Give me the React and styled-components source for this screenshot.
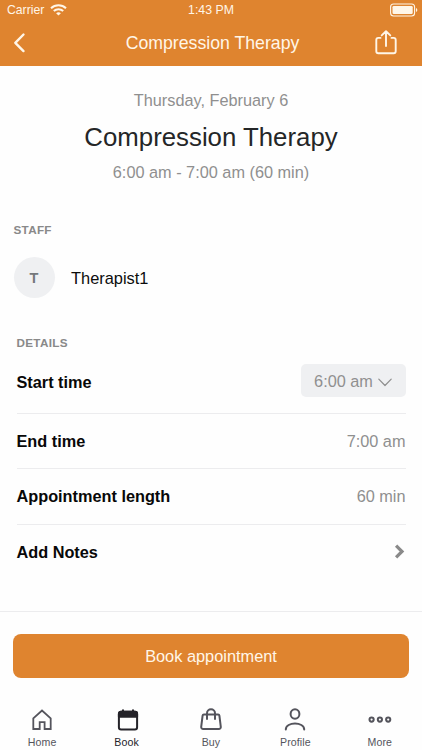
import React from "react";
import styled, { createGlobalStyle } from "styled-components";

const GlobalStyle = createGlobalStyle`
  * { box-sizing: border-box; }
  body { margin: 0; background: #fff; font-family: "Liberation Sans", Arial, sans-serif; }
  button { font: inherit; border: 0; padding: 0; background: none; color: inherit; }
`;

const Screen = styled.div`
  width: 422px;
  height: 750px;
  display: flex;
  flex-direction: column;
  background: #fefefe;
  overflow: hidden;
`;

const Header = styled.header`
  height: 66px;
  background: #df842f;
  color: #fff6e8;
`;

const StatusBar = styled.div`
  height: 20px;
  display: grid;
  grid-template-columns: 1fr auto 1fr;
  align-items: center;
  padding: 0 4px 0 7px;
  font-size: 12.2px;
  line-height: 18px;
`;

const Carrier = styled.div`
  display: flex;
  align-items: center;
  gap: 6px;
`;

const Clock = styled.div`
  margin-left: -3px;
  font-size: 12.3px;
`;

const BatteryBox = styled.div`
  display: flex;
  justify-content: flex-end;
`;

const NavBar = styled.div`
  height: 46px;
  display: grid;
  grid-template-columns: 40px 1fr 40px;
  align-items: center;
  padding: 0 21px 0 11px;
`;

const NavTitle = styled.div`
  padding-left: 13px;
  font-size: 17.7px;
  text-align: center;
  white-space: nowrap;
`;

const IconButton = styled.button`
  display: flex;
  justify-content: ${(p) => (p.$end ? "flex-end" : "flex-start")};
`;

const Summary = styled.section`
  display: flex;
  flex-direction: column;
  align-items: center;
  height: 156px;
  padding-top: 23px;
  white-space: nowrap;
`;

const SummaryText = styled.div`
  font-size: 16.3px;
  line-height: 22px;
  color: #8f8f8f;
`;

const Title = styled.h1`
  margin: 10px 0 8px;
  font-size: 25.8px;
  font-weight: 400;
  line-height: 32px;
  color: #242627;
`;

const SectionLabel = styled.h2`
  margin: 0;
  font-size: 11.7px;
  font-weight: 700;
  line-height: 16px;
  letter-spacing: 0.3px;
  color: #898989;
`;

const Staff = styled.section`
  height: 113px;
  padding-left: 13.5px;
`;

const StaffRow = styled.div`
  display: flex;
  align-items: center;
  gap: 16.5px;
  margin-top: 19px;
  font-size: 16.4px;
  color: #0c0c0c;
`;

const StaffName = styled.span`
  padding-top: 2px;
`;

const Avatar = styled.div`
  width: 41px;
  height: 41px;
  display: flex;
  align-items: center;
  justify-content: center;
  border-radius: 50%;
  background: #eff0f2;
  color: #75787c;
  font-size: 14.5px;
  font-weight: 700;
`;

const Details = styled.section`
  flex: 1;
  padding: 0 16px 0 16.5px;
`;

const Row = styled.div`
  height: ${(p) => p.$height || 55.3}px;
  display: flex;
  align-items: center;
  justify-content: space-between;
  padding-right: 0.5px;
  border-bottom: ${(p) => (p.$last ? 0 : 1)}px solid #ececee;
`;

const RowLabel = styled.span`
  font-size: 16.3px;
  font-weight: 700;
  color: #080808;
`;

const RowValue = styled.span`
  font-size: 16.3px;
  color: #8f8f8f;
`;

const TimeSelect = styled.button`
  width: 105px;
  height: 33px;
  display: flex;
  align-items: center;
  justify-content: center;
  gap: 5px;
  margin-top: -3px;
  padding-top: 1px;
  border-radius: 5px;
  background: #eff0f2;
  color: #8f8f8f;
  font-size: 16.3px;

  svg {
    margin-top: 2px;
  }
`;

const ActionBar = styled.div`
  height: 79px;
  padding: 22px 13px 0;
  border-top: 1px solid #ececee;
`;

const BookButton = styled.button`
  width: 100%;
  height: 44px;
  border-radius: 8px;
  background: #df842f;
  color: #fff6e8;
  font-size: 16.35px;
`;

const TabBar = styled.nav`
  height: 60px;
  display: grid;
  grid-template-columns: repeat(5, 84.4px);
`;

const Tab = styled.div`
  display: flex;
  flex-direction: column;
  align-items: center;
  padding-top: 16px;
  font-size: 10.6px;
  line-height: 12px;
  letter-spacing: 0.1px;
  color: ${(p) => (p.$active ? "#242329" : "#54545c")};
`;

const TabIcon = styled.svg`
  width: 26px;
  height: 26px;
  margin-bottom: 4px;
  fill: none;
  stroke: currentColor;
  stroke-width: 2;
  stroke-linejoin: round;
  stroke-linecap: round;
`;

const Wifi = () => (
  <svg width="17" height="12" viewBox="0 0 17 12" fill="none" stroke="currentColor" strokeWidth="2">
    <path d="M1 4.2C5.2.2 11.8.2 16 4.2M3.8 7.1c2.7-2.5 6.7-2.5 9.4 0" />
    <path d="M6.1 9.2c1.4-1.2 3.4-1.2 4.8 0L8.5 11.6Z" fill="currentColor" stroke="none" />
  </svg>
);

const Battery = () => (
  <svg width="28" height="14" viewBox="0 0 28 14" fill="none">
    <rect x=".6" y="1" width="24" height="12" rx="3" stroke="currentColor" strokeWidth="1.1" />
    <rect x="2.5" y="3" width="20.2" height="8" rx="1.2" fill="currentColor" />
    <path d="M26 5c1.8.7 1.8 3.3 0 4Z" fill="currentColor" />
  </svg>
);

const BackIcon = () => (
  <svg width="16" height="22" viewBox="0 0 16 22" fill="none" stroke="currentColor" strokeWidth="2.4" strokeLinecap="round" strokeLinejoin="round">
    <path d="M12.5 2.5 4.3 10.8l8.2 8.3" />
  </svg>
);

const ShareIcon = () => (
  <svg width="30" height="30" viewBox="0 0 30 30" fill="none" stroke="currentColor" strokeWidth="1.9" strokeLinecap="round" strokeLinejoin="round">
    <path d="M9.5 9.9H7.3a2 2 0 0 0-2 2v11.3a2 2 0 0 0 2 2h15.4a2 2 0 0 0 2-2V11.9a2 2 0 0 0-2-2h-2.2M15 18V4M10.7 7.4 15 3.3l4.3 4.1" />
  </svg>
);

const ChevronDown = () => (
  <svg width="14" height="9" viewBox="0 0 14 9" fill="none" stroke="currentColor" strokeWidth="1.2" strokeLinecap="round" strokeLinejoin="round">
    <path d="m.8 1.1 6.2 6.4 6.2-6.4" />
  </svg>
);

const ChevronRight = () => (
  <svg width="12" height="16" viewBox="0 0 12 16" fill="none" stroke="#8a8a8a" strokeWidth="3.2">
    <path d="m2.1 1.6 5.9 5.9-5.9 5.9" />
  </svg>
);

const tabs = [
  { name: "Home", icon: <path d="M4.3 23V12.4L13 4.5l8.7 7.9V23h-6.1v-6.8h-4.9V23Z" strokeLinejoin="miter" strokeWidth="1.8" /> },
  {
    name: "Book",
    active: true,
    icon: (
      <>
        <rect x="4.9" y="5.8" width="18.2" height="17.7" rx="2.2" />
        <path d="M4.9 10.8V7.8a2 2 0 0 1 2-2h14.2a2 2 0 0 1 2 2v3Z" fill="currentColor" />
        <path d="M9 4.2v3M19 4.2v3" />
      </>
    ),
  },
  {
    name: "Buy",
    icon: (
      <>
        <path d="M6 8.5h14a1.4 1.4 0 0 1 1.4 1.2l1.4 11.2a2 2 0 0 1-2 2.2H5.2a2 2 0 0 1-2-2.2L4.6 9.7A1.4 1.4 0 0 1 6 8.5Z" />
        <path d="M9 13V7.3a4 4 0 0 1 8 0V13" />
      </>
    ),
  },
  {
    name: "Profile",
    icon: (
      <>
        <ellipse cx="13" cy="8" rx="4.4" ry="4.8" />
        <path d="M3.8 23.5c0-8 18.4-8 18.4 0" />
      </>
    ),
  },
  {
    name: "More",
    icon: (
      <>
        <circle cx="4.6" cy="13.6" r="2.1" />
        <circle cx="12.9" cy="13.6" r="2.1" />
        <circle cx="21.2" cy="13.6" r="2.1" />
      </>
    ),
  },
];

export default function App() {
  return (
    <Screen>
      <GlobalStyle />
      <Header>
        <StatusBar>
          <Carrier>Carrier <Wifi /></Carrier>
          <Clock>1:43 PM</Clock>
          <BatteryBox><Battery /></BatteryBox>
        </StatusBar>
        <NavBar>
          <IconButton aria-label="Back"><BackIcon /></IconButton>
          <NavTitle>Compression Therapy</NavTitle>
          <IconButton $end aria-label="Share"><ShareIcon /></IconButton>
        </NavBar>
      </Header>
      <Summary>
        <SummaryText>Thursday, February 6</SummaryText>
        <Title>Compression Therapy</Title>
        <SummaryText>6:00 am - 7:00 am (60 min)</SummaryText>
      </Summary>
      <Staff>
        <SectionLabel>STAFF</SectionLabel>
        <StaffRow><Avatar>T</Avatar><StaffName>Therapist1</StaffName></StaffRow>
      </Staff>
      <Details>
        <SectionLabel>DETAILS</SectionLabel>
        <Row $height={63}>
          <RowLabel>Start time</RowLabel>
          <TimeSelect>6:00 am <ChevronDown /></TimeSelect>
        </Row>
        <Row><RowLabel>End time</RowLabel><RowValue>7:00 am</RowValue></Row>
        <Row><RowLabel>Appointment length</RowLabel><RowValue>60 min</RowValue></Row>
        <Row $last><RowLabel>Add Notes</RowLabel><ChevronRight /></Row>
      </Details>
      <ActionBar><BookButton>Book appointment</BookButton></ActionBar>
      <TabBar>
        {tabs.map((t) => (
          <Tab key={t.name} $active={t.active}>
            <TabIcon viewBox="0 0 26 26">{t.icon}</TabIcon>
            {t.name}
          </Tab>
        ))}
      </TabBar>
    </Screen>
  );
}
